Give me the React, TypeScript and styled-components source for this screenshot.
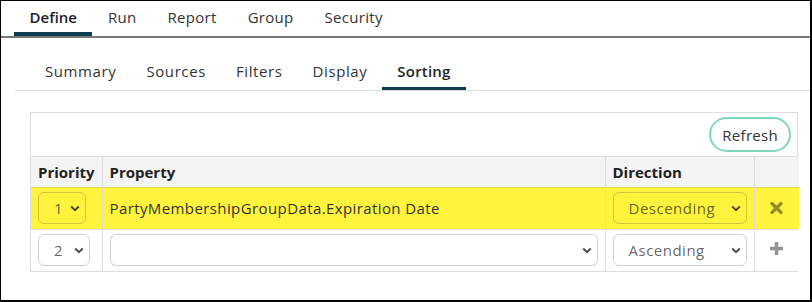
import React from "react";
import styled, { createGlobalStyle } from "styled-components";

const Global = createGlobalStyle`
  html, body { margin: 0; padding: 0; background: #fff; }
  body { font-family: "Open Sans", "Noto Sans", sans-serif; color: #333; }
  * { box-sizing: border-box; }
`;

const Frame = styled.div`
  width: 812px;
  height: 302px;
  border: 1px solid #000;
  border-right-width: 2px;
  border-bottom-width: 2px;
  background: #fff;
  overflow: hidden;
`;

const TopTabs = styled.div`
  display: flex;
  height: 37px;
  border-bottom: 2px solid #777;
  padding-left: 13px;
`;

const TopTab = styled.div<{ $active?: boolean }>`
  height: 35px;
  padding: 0 15.5px;
  display: flex;
  align-items: center;
  font-size: 15px;
  letter-spacing: ${(p) => (p.$active ? "0" : "0.3px")};
  font-weight: ${(p) => (p.$active ? 600 : 400)};
  color: ${(p) => (p.$active ? "#222" : "#333")};
  border-bottom: 4px solid ${(p) => (p.$active ? "#0d3e50" : "transparent")};
  padding-top: 1px;
`;

const Body = styled.div`
  padding: 16px 0 0 14px;
`;

const SubTabs = styled.div`
  display: flex;
  border-bottom: 1px solid #ddd;
  padding-left: 15px;
`;

const SubTab = styled.div<{ $active?: boolean }>`
  height: 36px;
  padding: 1px 15px 0;
  display: flex;
  align-items: center;
  font-size: 15px;
  letter-spacing: ${(p) => (p.$active ? "0.2px" : "0.6px")};
  font-weight: ${(p) => (p.$active ? 600 : 400)};
  color: ${(p) => (p.$active ? "#222" : "#333")};
  border-bottom: 3px solid ${(p) => (p.$active ? "#0d3e50" : "transparent")};
`;

const Panel = styled.div`
  margin: 21px 11px 0 15px;
  width: 768px;
  border: 1px solid #ddd;
`;

const Toolbar = styled.div`
  display: flex;
  justify-content: flex-end;
  padding: 4px 6px 4px;
  border-bottom: 1px solid #ddd;
`;

const RefreshButton = styled.button`
  height: 35px;
  padding: 0 11px;
  border: 2px solid #7fd8b9;
  border-radius: 18px;
  background: #fff;
  font-family: inherit;
  font-size: 15px;
  letter-spacing: 0.3px;
  color: #333;
`;

const Table = styled.table`
  width: 100%;
  border-collapse: collapse;
  table-layout: fixed;
`;

const HeadCell = styled.th<{ $w: number }>`
  width: ${(p) => p.$w}px;
  height: 30px;
  background: #f4f4f4;
  text-align: left;
  font-size: 15px;
  font-weight: 700;
  color: #222;
  padding: 0 7px;
  border-left: 1px solid #ddd;
  &:first-child { border-left: none; }
`;

const Row = styled.tr<{ $hl?: boolean }>`
  background: ${(p) => (p.$hl ? "#fff33e" : "#fff")};
  border-top: 1px solid ${(p) => (p.$hl ? "#e0d64a" : "#ddd")};
`;

const Cell = styled.td<{ $center?: boolean }>`
  height: 42px;
  padding: 0 7px;
  font-size: 15px;
  letter-spacing: 0.4px;
  color: #333;
  border-left: 1px solid #ddd;
  text-align: ${(p) => (p.$center ? "center" : "left")};
  &:first-child { border-left: none; }
`;

const SelectBox = styled.div<{ $w: number; $white?: boolean }>`
  position: relative;
  width: ${(p) => p.$w}px;
  height: 32px;
  border: 1px solid rgba(0, 0, 0, 0.18);
  border-radius: 6px;
  background: ${(p) => (p.$white ? "#fff" : "transparent")};
  display: flex;
  align-items: center;
  padding-left: 15px;
  font-size: 15px;
  letter-spacing: 0.5px;
  color: rgba(0, 0, 0, 0.62);
`;

const Chevron = styled.svg<{ $right: number }>`
  position: absolute;
  right: ${(p) => p.$right}px;
  top: 12px;
  width: 10px;
  height: 7px;
`;

const IconButton = styled.span`
  display: inline-flex;
  color: rgba(0, 0, 0, 0.42);
`;

function Select({ w, value, white, chevRight = 5 }: { w: number; value: string; white?: boolean; chevRight?: number }) {
  return (
    <SelectBox $w={w} $white={white}>
      {value}
      <Chevron $right={chevRight} viewBox="0 0 10 7">
        <path d="M1.2 1.5 L5 5.2 L8.8 1.5" fill="none" stroke="rgba(0,0,0,0.7)" strokeWidth="2" />
      </Chevron>
    </SelectBox>
  );
}

export default function App() {
  return (
    <>
      <Global />
      <Frame>
        <TopTabs>
          <TopTab $active>Define</TopTab>
          <TopTab>Run</TopTab>
          <TopTab>Report</TopTab>
          <TopTab>Group</TopTab>
          <TopTab>Security</TopTab>
        </TopTabs>
        <Body>
          <SubTabs>
            <SubTab>Summary</SubTab>
            <SubTab>Sources</SubTab>
            <SubTab>Filters</SubTab>
            <SubTab>Display</SubTab>
            <SubTab $active>Sorting</SubTab>
          </SubTabs>
          <Panel>
            <Toolbar>
              <RefreshButton>Refresh</RefreshButton>
            </Toolbar>
            <Table>
              <thead>
                <tr>
                  <HeadCell $w={71}>Priority</HeadCell>
                  <HeadCell $w={503}>Property</HeadCell>
                  <HeadCell $w={149}>Direction</HeadCell>
                  <HeadCell $w={45}></HeadCell>
                </tr>
              </thead>
              <tbody>
                <Row $hl>
                  <Cell><Select w={48} value="1" /></Cell>
                  <Cell>PartyMembershipGroupData.Expiration Date</Cell>
                  <Cell><Select w={134} value="Descending" /></Cell>
                  <Cell $center>
                    <IconButton>
                      <svg width="13" height="12" viewBox="0 0 13 12">
                        <path d="M2 1.5 L11 10.5 M11 1.5 L2 10.5" stroke="currentColor" strokeWidth="3.2" strokeLinecap="round" />
                      </svg>
                    </IconButton>
                  </Cell>
                </Row>
                <Row>
                  <Cell><Select w={52} value="2" /></Cell>
                  <Cell><Select w={488} value="" white /></Cell>
                  <Cell><Select w={134} value="Ascending" /></Cell>
                  <Cell $center>
                    <IconButton>
                      <svg width="15" height="15" viewBox="0 0 15 15">
                        <path d="M7.5 1 V14 M1 7.5 H14" stroke="currentColor" strokeWidth="3.6" />
                      </svg>
                    </IconButton>
                  </Cell>
                </Row>
              </tbody>
            </Table>
          </Panel>
        </Body>
      </Frame>
    </>
  );
}
